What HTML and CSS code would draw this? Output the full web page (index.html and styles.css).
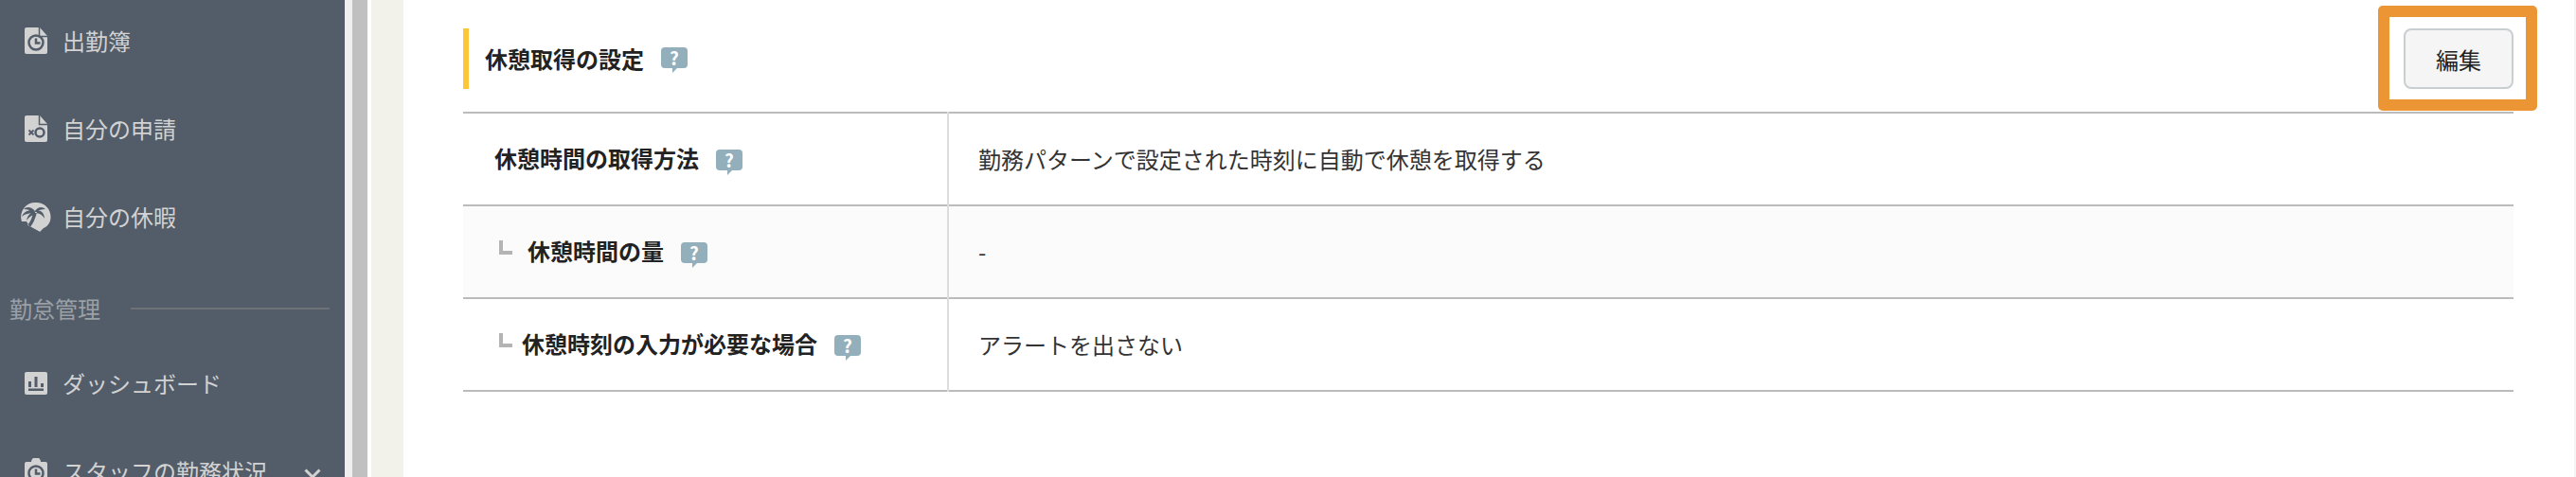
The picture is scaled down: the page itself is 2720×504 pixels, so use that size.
FILE: index.html
```html
<!DOCTYPE html>
<html lang="ja">
<head>
    <meta charset="UTF-8">
    <title>休憩取得の設定</title>
    <link rel="stylesheet" href="styles.css">
</head>
<body>
    <!-- Sidebar -->
    <nav class="sidebar">
        <a class="nav-item">
            <svg class="nav-icon" viewBox="0 0 24 28"><path class="fill" d="M2 0h14l8 9v17a2 2 0 0 1-2 2H2a2 2 0 0 1-2-2V2a2 2 0 0 1 2-2z"/><path class="cut" d="M15.500 0v9.500H24" /><circle class="line" cx="12" cy="16" r="7.500"/><path class="line" d="M12 11.500V16.500H16.500"/></svg>
            <span>出勤簿</span>
        </a>
        <a class="nav-item">
            <svg class="nav-icon" viewBox="0 0 24 28"><path class="fill" d="M2 0h14l8 9v17a2 2 0 0 1-2 2H2a2 2 0 0 1-2-2V2a2 2 0 0 1 2-2z"/><path class="cut" d="M15.500 0v9.500H24" /><circle class="line" cx="16" cy="18" r="4.500"/><path class="line thin" d="M4.500 15.500l5 5M9.500 15.500l-5 5"/></svg>
            <span>自分の申請</span>
        </a>
        <a class="nav-item">
            <svg class="nav-icon palm" viewBox="0 0 32 32"><path class="fill" d="M16 1a15 15 0 0 1 15.500 15c0 6-3 10-7.500 12l-4 4-11-6L1 21a15 15 0 0 1 15-20z"/><path class="cut-fill" d="M0 21h6l3 5 11 6H0zM13 11q-1 8-6 14l3 2q5-7 7-16zM15 10C11 5 6 5 3 8c4 0 7 1 10 3zM15 10C9 8 3 10 1 16c3-3 8-4 13-4zM15 11c-4 0-8 3-9 9 3-4 6-6 9-7zM15 10c3-5 8-5 11-2-4 0-7 1-10 3zM15 10c5-2 10 1 10 8-2-4-6-6-10-6z"/></svg>
            <span>自分の休暇</span>
        </a>
        <div class="nav-section">
            <span>勤怠管理</span>
            <i class="nav-rule"></i>
        </div>
        <a class="nav-item">
            <svg class="nav-icon" viewBox="0 0 24 24"><rect class="fill" width="24" height="24" rx="2"/><path class="cut-fill" d="M10.500 5h3v11h-3zM4 10h3v6H4zM17 12h3v4h-3zM4 17.500h16V20H4z"/></svg>
            <span>ダッシュボード</span>
        </a>
        <a class="nav-item">
            <svg class="nav-icon" viewBox="0 0 24 28"><path class="fill" d="M2 4h5a5 5 0 0 1 10 0h5a2 2 0 0 1 2 2v20a2 2 0 0 1-2 2H2a2 2 0 0 1-2-2V6a2 2 0 0 1 2-2z"/><circle class="line" cx="12" cy="16" r="7.500"/><path class="line" d="M12 11.500V16.500H16.500"/></svg>
            <span>スタッフの勤務状況</span>
            <svg class="nav-chevron" viewBox="0 0 18 11"><path d="M1.500 1.500L9 9l7.500-7.500"/></svg>
        </a>
    </nav>
    <div class="scrollbar"></div>
    <div class="page-gutter"></div>

    <!-- Main -->
    <main class="content">
        <div class="section-head">
            <h2 class="section-title">休憩取得の設定<span class="help">?</span></h2>
            <button class="edit-btn">編集</button>
        </div>
        <div class="highlight"></div>

        <table class="settings">
            <tr>
                <th>休憩時間の取得方法<span class="help">?</span></th>
                <td>勤務パターンで設定された時刻に自動で休憩を取得する</td>
            </tr>
            <tr class="alt">
                <th><i class="branch wide"></i>休憩時間の量<span class="help">?</span></th>
                <td>-</td>
            </tr>
            <tr>
                <th><i class="branch"></i>休憩時刻の入力が必要な場合<span class="help">?</span></th>
                <td>アラートを出さない</td>
            </tr>
        </table>
    </main>
</body>
</html>
```

FILE: styles.css
```css
* {
    box-sizing: border-box;
}

html, body {
    height: 100%;
}

body {
    margin: 0;
    display: flex;
    overflow: hidden;
    background: #fff;
    color: #222;
    font-family: "Noto Sans CJK JP", "Noto Sans", sans-serif;
}

/* Sidebar */
.sidebar {
    flex: 0 0 372px;
    height: 504px;
    overflow: hidden;
    background: #525d69;
    border-right: 8px solid #efefef;
    color: #d2d2d2;
    font-size: 24px;
}

.nav-item {
    display: flex;
    align-items: center;
    height: 93px;
    padding: 0 25px 0 26px;
}

.nav-item:first-child {
    margin-top: -4px;
}

.nav-item span {
    margin-left: 16px;
    white-space: nowrap;
}

.nav-icon {
    flex: 0 0 24px;
    width: 24px;
    height: 28px;
}

.nav-icon.palm {
    flex: 0 0 32px;
    width: 32px;
    height: 32px;
    margin-left: -4px;
    margin-right: -4px;
}

.nav-icon .fill {
    fill: #d2d2d2;
}

.nav-icon .cut {
    fill: none;
    stroke: #525d69;
    stroke-width: 1.500;
}

.nav-icon .cut-fill {
    fill: #525d69;
}

.nav-icon .line {
    fill: none;
    stroke: #525d69;
    stroke-width: 2.500;
}

.nav-icon .thin {
    stroke-width: 1.800;
}

.nav-section {
    display: flex;
    align-items: center;
    height: 83px;
    padding: 18px 16px 0 10px;
    color: #9ba0a6;
}

.nav-rule {
    flex: 1;
    height: 2px;
    margin-left: 32px;
    background: #6e7276;
}

.nav-chevron {
    width: 18px;
    height: 11px;
    margin-left: auto;
    margin-top: 6px;
    fill: none;
    stroke: #d2d2d2;
    stroke-width: 3;
}

.scrollbar {
    flex: 0 0 16px;
    background: #c0c0c0;
}

.page-gutter {
    flex: 0 0 38px;
    background: #f2f2ea;
    border-left: 4px solid #fff;
}

/* Main */
.content {
    position: relative;
    flex: 1;
    padding: 30px 64px 0 63px;
    border-right: 2px solid #f4f4f4;
}

.section-head {
    display: flex;
    justify-content: space-between;
    height: 64px;
    margin-bottom: 24px;
}

.section-title {
    display: flex;
    align-items: center;
    margin: 0;
    padding: 0 0 2px 17px;
    border-left: 6px solid #ffc53a;
    font-size: 24px;
    font-weight: 700;
}

.edit-btn {
    width: 116px;
    height: 64px;
    border: 2px solid #c9ced1;
    border-radius: 8px;
    background: #f5f5f5;
    color: #222;
    font: inherit;
    font-size: 24px;
}

/* orange frame round the edit button */
.highlight {
    position: absolute;
    top: 6px;
    right: 39px;
    width: 168px;
    height: 111px;
    border: 12px solid #ec9535;
    border-radius: 5px;
}

.help {
    position: relative;
    display: inline-block;
    width: 28px;
    height: 22px;
    margin-left: 18px;
    border-radius: 4px;
    background: #94afbc;
    color: #fff;
    font-size: 19px;
    font-weight: 700;
    line-height: 22px;
    text-align: center;
}

.help::after {
    content: "";
    position: absolute;
    top: 22px;
    left: 12px;
    border-top: 5px solid #94afbc;
    border-right: 5px solid transparent;
}

.settings {
    width: 100%;
    border-collapse: collapse;
    border-top: 2px solid #bbb;
    font-size: 24px;
}

.settings tr {
    height: 98px;
    border-bottom: 2px solid #bbb;
}

.settings tr.alt {
    background: #fbfbfb;
}

.settings th {
    width: 512px;
    padding: 0 0 4px 33px;
    border-right: 2px solid #ddd;
    font-weight: 700;
    text-align: left;
    white-space: nowrap;
}

.settings td {
    padding: 0 0 2px 31px;
    color: #333;
}

.branch {
    display: inline-block;
    width: 14px;
    height: 15px;
    margin: 0 10px 6px 5px;
    border-left: 4px solid #b4b4b4;
    border-bottom: 4px solid #b4b4b4;
}

.branch.wide {
    margin-right: 16px;
}
```
